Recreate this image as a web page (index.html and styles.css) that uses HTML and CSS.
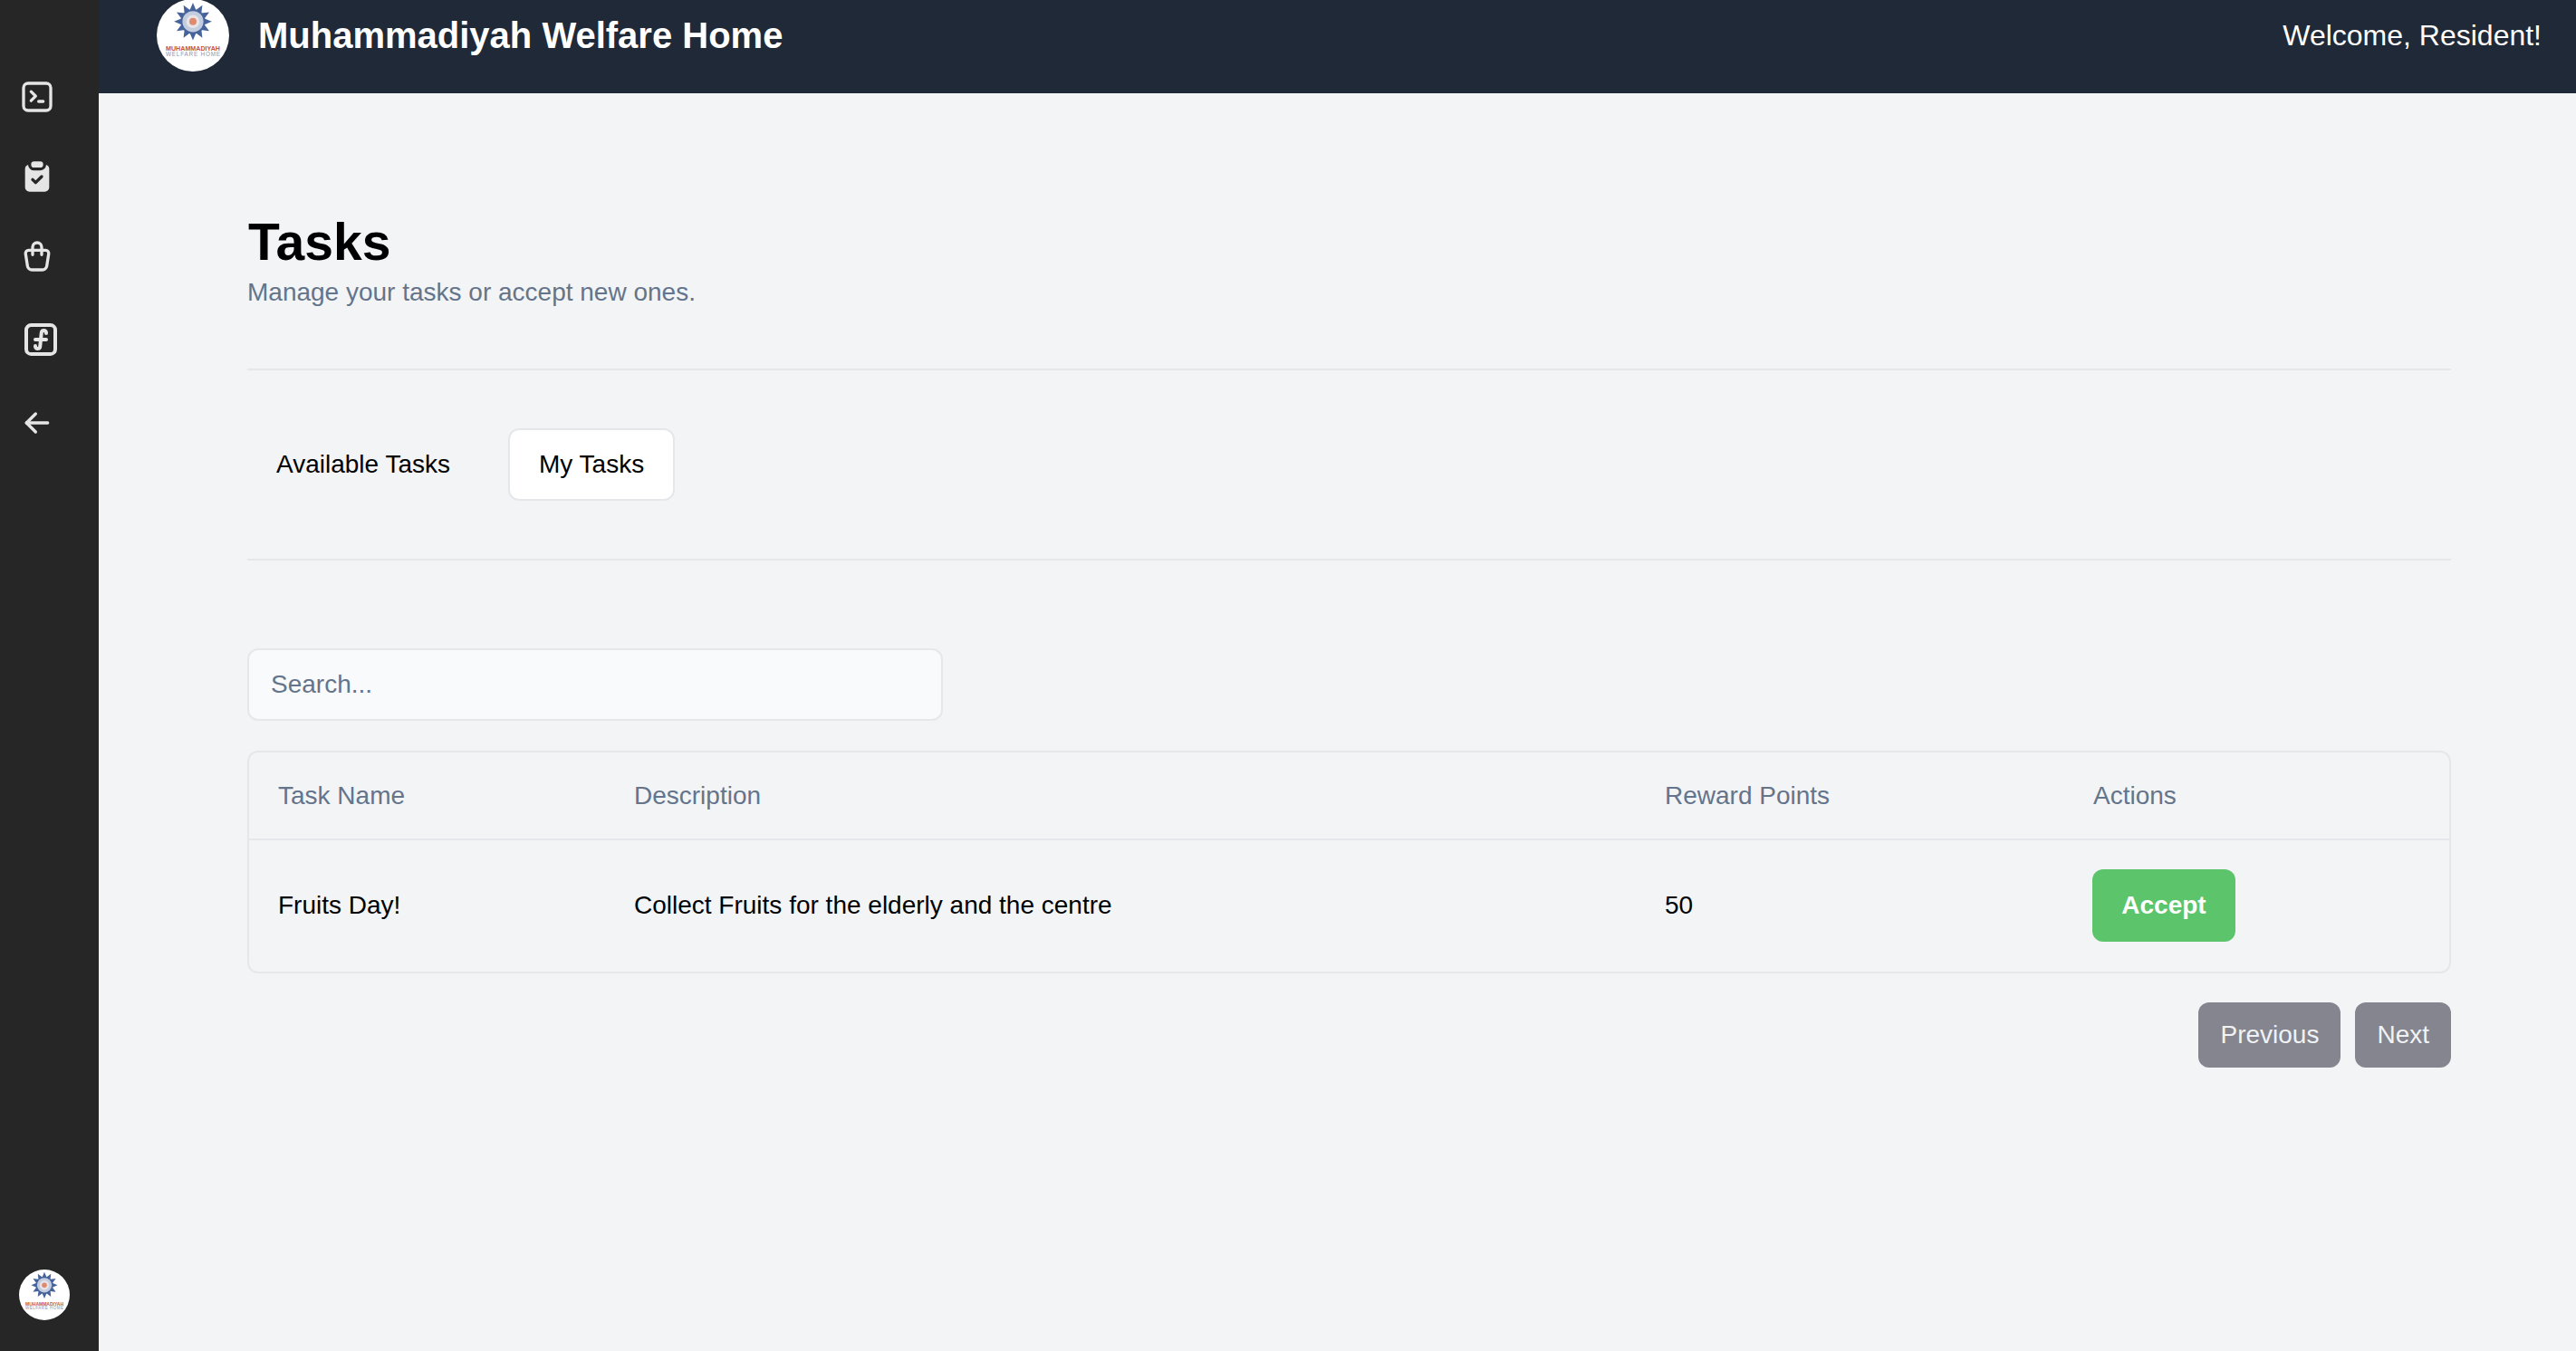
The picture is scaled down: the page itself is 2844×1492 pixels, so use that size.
FILE: index.html
```html
<!DOCTYPE html>
<html lang="en">
<head>
<meta charset="utf-8">
<title>Tasks</title>
<link rel="stylesheet" href="styles.css">
</head>
<body>
<svg class="defs" width="0" height="0" aria-hidden="true">
  <defs>
    <g id="logo-mark">
      <g fill="#46639c">
        <polygon id="ray" points="50,5 55.5,18 44.5,18"/>
        <use href="#ray" transform="rotate(30 50 31)"/>
        <use href="#ray" transform="rotate(60 50 31)"/>
        <use href="#ray" transform="rotate(90 50 31)"/>
        <use href="#ray" transform="rotate(120 50 31)"/>
        <use href="#ray" transform="rotate(150 50 31)"/>
        <use href="#ray" transform="rotate(180 50 31)"/>
        <use href="#ray" transform="rotate(210 50 31)"/>
        <use href="#ray" transform="rotate(240 50 31)"/>
        <use href="#ray" transform="rotate(270 50 31)"/>
        <use href="#ray" transform="rotate(300 50 31)"/>
        <use href="#ray" transform="rotate(330 50 31)"/>
      </g>
      <circle cx="50" cy="31" r="17" fill="#46639c"/>
      <circle cx="50" cy="31" r="14.5" fill="#c3cde0"/>
      <circle cx="50" cy="31" r="9" fill="#e9e4e6"/>
      <circle cx="50" cy="31" r="5" fill="#dd8a70"/>
      <text x="50" y="71" text-anchor="middle" class="logo-top" textLength="75" lengthAdjust="spacingAndGlyphs">MUHAMMADIYAH</text>
      <text x="50" y="79" text-anchor="middle" class="logo-bottom" textLength="75" lengthAdjust="spacing">WELFARE HOME</text>
    </g>
  </defs>
</svg>
<div class="app">
  <aside class="sidebar">
    <nav class="side-nav">
      <svg class="icon" viewBox="0 0 24 24"><path d="M8 8.5l3 3l-3 3"/><path d="M13 15h3"/><path d="M3 6a3 3 0 0 1 3 -3h12a3 3 0 0 1 3 3v12a3 3 0 0 1 -3 3h-12a3 3 0 0 1 -3 -3z"/></svg>
      <svg class="icon icon-fill" viewBox="0 0 24 24"><path d="M17.997 4.17a3 3 0 0 1 2.003 2.83v12a3 3 0 0 1 -3 3h-10a3 3 0 0 1 -3 -3v-12a3 3 0 0 1 2.003 -2.83a4 4 0 0 0 3.997 3.83h4a4 4 0 0 0 3.98 -3.597l.017 -.232zm-2.29 7.123a1 1 0 0 0 -1.414 0l-3.293 3.292l-1.293 -1.292l-.094 -.083a1 1 0 0 0 -1.32 1.497l2 2l.094 .083a1 1 0 0 0 1.32 -.083l4 -4l.083 -.094a1 1 0 0 0 -.083 -1.32z"/><path d="M14 2a2 2 0 1 1 0 4h-4a2 2 0 1 1 0 -4z"/></svg>
      <svg class="icon" viewBox="0 0 24 24"><path d="M6.331 8h11.339a2 2 0 0 1 1.977 2.304l-1.255 8.152a3 3 0 0 1 -2.966 2.544h-6.852a3 3 0 0 1 -2.965 -2.544l-1.255 -8.152a2 2 0 0 1 1.977 -2.304z"/><path d="M9 11v-5a3 3 0 0 1 6 0v5"/></svg>
      <svg class="icon icon-lg" viewBox="0 0 24 24"><path d="M4 6.667a2.667 2.667 0 0 1 2.667 -2.667h10.666a2.667 2.667 0 0 1 2.667 2.667v10.666a2.667 2.667 0 0 1 -2.667 2.667h-10.666a2.667 2.667 0 0 1 -2.667 -2.667z"/><path d="M9 15.5v.25c0 .69 .56 1.25 1.25 1.25c.71 0 1.304 -.538 1.374 -1.244l.752 -7.512a1.381 1.381 0 0 1 1.374 -1.244c.69 0 1.25 .56 1.25 1.25v.25"/><path d="M9 12h6"/></svg>
      <svg class="icon" viewBox="0 0 24 24"><path d="M5 12h14"/><path d="M5 12l6 6"/><path d="M5 12l6 -6"/></svg>
    </nav>
    <svg class="logo logo-sm" viewBox="0 0 100 100"><circle cx="50" cy="50" r="50" fill="#fff"/><use href="#logo-mark"/></svg>
  </aside>
  <div class="page">
    <header class="topbar">
      <div class="brand">
        <svg class="logo" viewBox="0 0 100 100"><circle cx="50" cy="50" r="50" fill="#fff"/><use href="#logo-mark"/></svg>
        <span class="brand-name">Muhammadiyah Welfare Home</span>
      </div>
      <span class="welcome">Welcome, Resident!</span>
    </header>
    <main class="content">
      <section class="intro">
        <h1 class="title">Tasks</h1>
        <p class="subtitle">Manage your tasks or accept new ones.</p>
      </section>
      <div class="tabs">
        <button class="tab">Available Tasks</button>
        <button class="tab tab-active">My Tasks</button>
      </div>
      <input class="search" type="text" placeholder="Search...">
      <div class="table-wrap">
        <table class="table">
          <colgroup>
            <col class="col-name"><col class="col-desc"><col class="col-points"><col>
          </colgroup>
          <thead>
            <tr><th>Task Name</th><th>Description</th><th>Reward Points</th><th>Actions</th></tr>
          </thead>
          <tbody>
            <tr>
              <td>Fruits Day!</td>
              <td>Collect Fruits for the elderly and the centre</td>
              <td>50</td>
              <td><button class="accept">Accept</button></td>
            </tr>
          </tbody>
        </table>
      </div>
      <div class="pager">
        <button class="page-btn">Previous</button>
        <button class="page-btn">Next</button>
      </div>
    </main>
  </div>
</div>
</body>
</html>
```
FILE: styles.css
```css
* { box-sizing: border-box; }
html, body { margin: 0; height: 100%; overflow: hidden; }
body { font-family: "Liberation Sans", Arial, sans-serif; background: #f3f4f6; color: #000; }
.defs { position: absolute; }
.logo-top { font: 700 9.6px "Liberation Sans", sans-serif; fill: #c4553f; }
.logo-bottom { font: 400 8px "Liberation Sans", sans-serif; fill: #8f93ad; }

.app { display: flex; height: 1492px; }
.sidebar { width: 109px; flex: none; background: #262626; display: flex; flex-direction: column; justify-content: space-between; padding: 87px 0 34px 21px; }
.side-nav { display: flex; flex-direction: column; align-items: flex-start; gap: 48px; }
.icon { width: 40px; height: 40px; fill: none; stroke: #e5e5e5; stroke-width: 2; stroke-linecap: round; stroke-linejoin: round; display: block; }
.icon-lg { width: 48px; height: 48px; }
.icon-fill { fill: #e5e5e5; stroke: none; }
.logo { width: 80px; height: 80px; display: block; flex: none; }
.logo-sm { width: 56px; height: 56px; }

.page { flex: 1; min-width: 0; display: flex; flex-direction: column; }
.topbar { height: 104px; margin-top: -1px; flex: none; background: #1f2937; color: #fff; display: flex; justify-content: space-between; align-items: flex-start; padding: 0 38px 0 64px; }
.brand { display: flex; align-items: center; gap: 32px; height: 80px; }
.brand-name { font-size: 40px; font-weight: 700; }
.welcome { font-size: 32px; line-height: 80px; }

.content { padding: 128px 138px 0 164px; }
.intro { border-bottom: 2px solid #e5e7eb; padding-bottom: 64px; }
.title { font-size: 57px; line-height: 72px; font-weight: 700; margin: 0; padding-left: 1px; }
.subtitle { font-size: 28px; line-height: 40px; color: #64748b; margin: 0; }
.tabs { display: flex; gap: 32px; padding: 64px 0 64px; border-bottom: 2px solid #e5e7eb; }
.tab { font: 28px "Liberation Sans", sans-serif; color: #000; height: 80px; padding: 0 32px; background: transparent; border: 0; border-radius: 12px; }
.tab-active { background: #fff; border: 2px solid #e5e7eb; }
.search { display: block; width: 768px; height: 80px; margin: 97px 0 33px; padding: 0 24px; font: 28px "Liberation Sans", sans-serif; background: #f8fafc; border: 2px solid #e5e7eb; border-radius: 12px; outline: none; }
.search::placeholder { color: #64748b; opacity: 1; }
.table-wrap { border: 2px solid #e5e7eb; border-radius: 12px; overflow: hidden; }
.table { width: 100%; border-collapse: collapse; table-layout: fixed; font-size: 28px; }
.col-name { width: 393px; }
.col-desc { width: 1138px; }
.col-points { width: 473px; }
.table th { font-weight: 400; color: #64748b; text-align: left; height: 96px; padding: 0 32px; border-bottom: 2px solid #e5e7eb; }
.table td { height: 146px; padding: 0 32px 2px; }
.accept { display: block; width: 158px; height: 80px; margin-left: -1px; font: 700 28px "Liberation Sans", sans-serif; color: #fff; background: #5cc46a; border: 0; border-radius: 12px; }
.pager { display: flex; justify-content: flex-end; gap: 16px; margin-top: 32px; }
.page-btn { height: 72px; padding: 0 24px; font: 28px "Liberation Sans", sans-serif; color: #f1f2f4; background: #84858f; border: 0; border-radius: 12px; }
```
